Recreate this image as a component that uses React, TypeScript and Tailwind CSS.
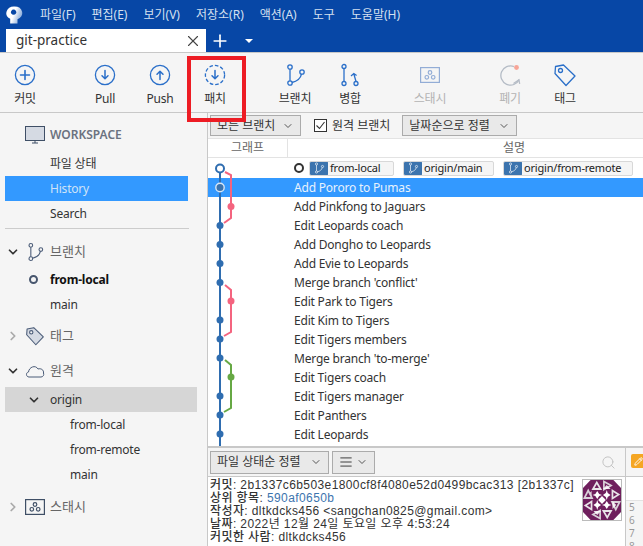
import { type ReactNode } from 'react';
import { ChevronDown, ChevronRight, Search, X, Plus, AlignJustify, Pencil } from 'lucide-react';

const BLUE = '#2a6fc9';

function Ring({ children, dashed }: { children: ReactNode; dashed?: boolean }) {
  return (
    <svg width="24" height="24" viewBox="0 0 24 24" fill="none" stroke={BLUE} strokeWidth="1.3" strokeLinecap="round" strokeLinejoin="round">
      <circle cx="12" cy="12" r="9.6" strokeDasharray={dashed ? '3.6 2' : undefined} strokeLinecap="butt" />
      {children}
    </svg>
  );
}

const DownArrow = <path d="M12 7.5v8M9 12.8l3 3 3-3" strokeWidth="1.5" />;

function BranchIcon({ color = BLUE, size = 24 }: { color?: string; size?: number }) {
  return (
    <svg width={size} height={size} viewBox="0 0 24 24" fill="none" stroke={color} strokeWidth="1.3">
      <circle cx="7" cy="4" r="2.2" />
      <circle cx="7" cy="20" r="2.2" />
      <circle cx="19" cy="9" r="2.2" />
      <path d="M7 6.2v11.6M9 19.5c5-1 8.5-4 9.5-8.3" />
    </svg>
  );
}

function MergeIcon() {
  return (
    <svg width="24" height="24" viewBox="0 0 24 24" fill="none" stroke={BLUE} strokeWidth="1.3">
      <circle cx="6" cy="3.5" r="2" />
      <circle cx="6" cy="20.5" r="2" />
      <circle cx="18" cy="20.5" r="2" />
      <path d="M6 5.5v13M18 18.5l-2-7M13 13l2.8-2.5 2.8 2" />
    </svg>
  );
}

function StashIcon({ color = '#93add6', w = 20, h = 16, stroke = 1.2 }: { color?: string; w?: number; h?: number; stroke?: number }) {
  return (
    <svg width={w} height={h} viewBox="0 0 20 16" fill="none" stroke={color} strokeWidth={stroke}>
      <rect x="0.6" y="0.6" width="18.8" height="14.8" />
      <circle cx="10" cy="5.5" r="1.8" />
      <circle cx="6.8" cy="10.3" r="1.8" />
      <circle cx="13.2" cy="10.3" r="1.8" />
    </svg>
  );
}

function DiscardIcon() {
  return (
    <svg width="24" height="24" viewBox="0 0 24 24" fill="none" stroke="#b5bcc6" strokeWidth="1.3">
      <path d="M16 3.6A9.6 9.6 0 1 0 21.2 16.5" />
      <path d="M15.5 20.5l5.4-3.6 0.8 4" />
      <circle cx="18.5" cy="4.5" r="2.4" fill="#f7a597" stroke="none" />
    </svg>
  );
}

function TagIcon({ color = BLUE, fill = 'none', size = 24 }: { color?: string; fill?: string; size?: number }) {
  return (
    <svg width={size} height={size} viewBox="0 0 24 24" fill={fill} stroke={color} strokeWidth="1.3" strokeLinejoin="round">
      <path d="M2.5 3.5l8-1.5L22 13l-9 9.5L2 10.5z" />
      <circle cx="7.5" cy="7.5" r="2" fill="#f5f5f5" />
    </svg>
  );
}

function Logo() {
  return (
    <svg width="17" height="18" viewBox="0 0 17 18" fill="none">
      <defs>
        <linearGradient id="logo-shade" x1="0" x2="1" y1="0" y2="0.4">
          <stop offset="0.55" stopColor="#fff" />
          <stop offset="1" stopColor="#8fb0dc" />
        </linearGradient>
      </defs>
      <path
        fillRule="evenodd"
        d="M8.5 0.5a7.7 6.6 0 0 1 3 12.7V17.5H4.2V12.8A7.7 6.6 0 0 1 8.5 0.5zM7.6 3.6a2.7 2.6 0 1 0 0.01 0z"
        fill="url(#logo-shade)"
      />
    </svg>
  );
}

const tools: { label: string; icon: ReactNode; cls: string; muted?: boolean }[] = [
  { label: '커밋', cls: '', icon: <Ring><path d="M12 7.5v9M7.5 12h9" strokeWidth="1.6" /></Ring> },
  { label: 'Pull', cls: 'ml-[30px]', icon: <Ring>{DownArrow}</Ring> },
  { label: 'Push', cls: 'ml-[5px]', icon: <Ring><path d="M12 16.5v-8M9 11.2l3-3 3 3" strokeWidth="1.5" /></Ring> },
  { label: '패치', cls: 'ml-[5px]', icon: <Ring dashed>{DownArrow}</Ring> },
  { label: '브랜치', cls: 'ml-[30px]', icon: <BranchIcon /> },
  { label: '병합', cls: 'ml-[5px]', icon: <MergeIcon /> },
  { label: '스태시', cls: 'ml-[30px]', muted: true, icon: <StashIcon /> },
  { label: '폐기', cls: 'ml-[30px]', muted: true, icon: <DiscardIcon /> },
  { label: '태그', cls: 'ml-[5px]', icon: <TagIcon /> },
];

const menus = ['파일(F)', '편집(E)', '보기(V)', '저장소(R)', '액션(A)', '도구', '도움말(H)'];

const commits = [
  'Add Pororo to Pumas',
  'Add Pinkfong to Jaguars',
  'Edit Leopards coach',
  'Add Dongho to Leopards',
  'Add Evie to Leopards',
  "Merge branch 'conflict'",
  'Edit Park to Tigers',
  'Edit Kim to Tigers',
  'Edit Tigers members',
  "Merge branch 'to-merge'",
  'Edit Tigers coach',
  'Edit Tigers manager',
  'Edit Panthers',
  'Edit Leopards',
];

function RefBadge({ name, width }: { name: string; width: string }) {
  return (
    <div className={`flex h-[15px] items-center overflow-hidden rounded-[2px] border border-[#d8d8d8] bg-[#f5f5f5] ${width}`}>
      <div className="flex h-[15px] w-[18px] shrink-0 items-center justify-center rounded-[2px] bg-[#3c74ae]">
        <BranchIcon color="#fff" size={12} />
      </div>
      <span className="ml-[2px] whitespace-nowrap text-[11px] tracking-[-0.2px] text-[#222]">{name}</span>
    </div>
  );
}

function Graph() {
  const blue = [10.5, 29.5, 67.5, 86.5, 105.5, 124.5, 162, 181, 200, 238, 257, 276];
  return (
    <svg className="absolute left-0 top-0" width="40" height="288" viewBox="0 0 40 288" fill="none">
      <path d="M12 11V288" stroke="#2f6db0" strokeWidth="2" />
      <path d="M17 14l6 3v43l-7 5" stroke="#f4647f" strokeWidth="2" />
      <path d="M17 127l6 5v42l-7 4" stroke="#f4647f" strokeWidth="2" />
      <path d="M17 202l6 5v43l-7 4" stroke="#66a844" strokeWidth="2" />
      <circle cx="23" cy="48.5" r="3.5" fill="#f4647f" />
      <circle cx="23" cy="143" r="3.5" fill="#f4647f" />
      <circle cx="23" cy="219" r="3.5" fill="#66a844" />
      {blue.map((y, i) =>
        i === 0 ? (
          <circle key={y} cx="12" cy={y} r="4" fill="#fff" stroke="#2f6db0" strokeWidth="2" />
        ) : i === 1 ? (
          <circle key={y} cx="12" cy={y} r="4.2" fill="#3c74ae" stroke="#d8e6f5" strokeWidth="1.4" />
        ) : (
          <circle key={y} cx="12" cy={y} r="3.5" fill="#2f6db0" />
        ),
      )}
    </svg>
  );
}

function Identicon() {
  return (
    <svg width="40" height="42" viewBox="0 0 40 40" preserveAspectRatio="none" className="shrink-0 border border-[#bbb]">
      <rect width="40" height="40" fill="#6f1f5d" />
      {[0, 90, 180, 270].map((r) => (
        <g key={r} transform={`rotate(${r} 20 20)`}>
          <path d="M0 0H8L0 8z" fill="#fff" />
          <path d="M14.5 2.5L18.5 9H10.5z" fill="#6f1f5d" stroke="#e9e4e8" strokeWidth="1.8" />
          <path d="M22 1.5L29.5 5.5L22 9.5z" fill="#6f1f5d" stroke="#d9d0d8" strokeWidth="1.8" />
          <path d="M15 11L17 14L20 15L17 16L15 19L13 16L10 15L13 14z" fill="#fff" />
          <path d="M9 11L5 15L9 19z" fill="#fff" opacity="0.85" />
        </g>
      ))}
      <path d="M20 16L24 20L20 24L16 20z" fill="#fff" />
    </svg>
  );
}

function DropButton({ label, width, children }: { label?: string; width: string; children?: ReactNode }) {
  return (
    <div className={`flex items-center justify-between border border-[#ababab] bg-[#e9e9e9] pl-[6px] pr-[6px] text-[12px] text-[#333] ${width}`}>
      {label ? <span className="whitespace-nowrap">{label}</span> : children}
      <ChevronDown size={12} strokeWidth={2} className="shrink-0 text-[#555]" />
    </div>
  );
}

function SideRow({ children, className = '' }: { children: ReactNode; className?: string }) {
  return <div className={`flex h-[25px] items-center whitespace-nowrap text-[12px] tracking-[-0.2px] ${className}`}>{children}</div>;
}

function Sidebar() {
  return (
    <aside className="w-[208px] shrink-0 border-r border-[#c8c8c8] bg-[#f5f5f5] pt-[9px] text-[#333]">
      <div className="flex h-[25px] items-center pl-[25px]">
        <svg width="20" height="18" viewBox="0 0 20 18" fill="#d5dae3" stroke="#3f4f66" strokeWidth="1">
          <rect x="0.5" y="0.5" width="19" height="14" />
          <path d="M7 17h6M10 15v2" />
        </svg>
        <span className="ml-[5px] text-[12px] font-semibold text-[#6b7280]">WORKSPACE</span>
      </div>
      <SideRow className="mt-[4px] pl-[50px]">파일 상태</SideRow>
      <SideRow className="ml-[5px] w-[183px] bg-[#3399ff] pl-[45px] text-[#cfe3f8]">History</SideRow>
      <SideRow className="pl-[50px]">Search</SideRow>
      <div className="ml-[5px] mt-[2px] h-[1px] w-[184px] bg-[#cccccc]" />
      <div className="mt-[10px] flex h-[25px] items-center pl-[6px] text-[13px] text-[#666]">
        <ChevronDown size={14} strokeWidth={3} className="text-[#333]" />
        <span className="ml-[5px]"><BranchIcon color="#4b5c78" size={20} /></span>
        <span className="ml-[5px]">브랜치</span>
      </div>
      <SideRow className="mt-[3px] pl-[29px] font-bold text-[#111]">
        <span className="h-[9px] w-[9px] rounded-full border-2 border-[#47566e]" />
        <span className="ml-[12px]">from-local</span>
      </SideRow>
      <SideRow className="pl-[50px]">main</SideRow>
      <div className="mt-[6px] flex h-[25px] items-center pl-[6px] text-[13px] text-[#666]">
        <ChevronRight size={14} strokeWidth={3} className="text-[#aaa]" />
        <span className="ml-[5px]"><TagIcon color="#4b5c78" fill="#d5dae3" size={20} /></span>
        <span className="ml-[5px]">태그</span>
      </div>
      <div className="mt-[10px] flex h-[25px] items-center pl-[6px] text-[13px] text-[#666]">
        <ChevronDown size={14} strokeWidth={3} className="text-[#333]" />
        <svg className="ml-[5px]" width="20" height="14" viewBox="0 0 20 14" fill="none" stroke="#4b5c78" strokeWidth="1">
          <path d="M4 13C1 13 .5 8.5 3.5 8 4 3 10.5 .5 13 5c3-1 6 1 5.5 4 .8 2-.5 4-2.5 4z" />
        </svg>
        <span className="ml-[5px]">원격</span>
      </div>
      <SideRow className="ml-[5px] mt-[4px] w-[192px] bg-[#d6d6d6] pl-[22px]">
        <ChevronDown size={14} strokeWidth={3} className="text-[#333]" />
        <span className="ml-[9px]">origin</span>
      </SideRow>
      <SideRow className="pl-[70px]">from-local</SideRow>
      <SideRow className="pl-[70px]">from-remote</SideRow>
      <SideRow className="pl-[70px]">main</SideRow>
      <div className="mt-[7px] flex h-[25px] items-center pl-[6px] text-[13px] text-[#666]">
        <ChevronRight size={14} strokeWidth={3} className="text-[#aaa]" />
        <span className="ml-[5px]"><StashIcon color="#3f4f66" /></span>
        <span className="ml-[5px]">스태시</span>
      </div>
    </aside>
  );
}

export default function App() {
  return (
    <div className="relative flex h-[546px] w-[643px] flex-col overflow-hidden bg-white font-['Noto_Sans','Noto_Sans_CJK_KR',sans-serif]">
      {/* Title bar */}
      <header className="h-[52px] shrink-0 bg-[#0747a6]">
        <div className="flex h-[29px] items-center pl-[6px]">
          <Logo />
          <nav className="ml-[17px] flex gap-[16px] text-[12px] text-[#d5e0f0]">
            {menus.map((m) => (
              <span key={m}>{m}</span>
            ))}
          </nav>
        </div>
        <div className="flex h-[23px] items-center pl-[6px]">
          <div className="flex h-[23px] w-[200px] items-center justify-between bg-white pl-[10px] pr-[4px] text-[13.5px] text-[#333]">
            git-practice
            <X size={18} strokeWidth={1.5} className="text-[#444]" />
          </div>
          <Plus size={20} strokeWidth={2} className="ml-[4px] text-white" />
          <span className="ml-[15px] h-0 w-0 border-x-[4px] border-t-[4px] border-x-transparent border-t-white" />
        </div>
      </header>

      {/* Toolbar */}
      <div className="flex h-[61px] shrink-0 border-y border-[#c8c8c8] bg-[#f5f5f5] pt-[10px]">
        {tools.map((t) => (
          <div key={t.label} className={`flex w-[50px] flex-col items-center ${t.cls}`}>
            <div className="flex h-[24px] items-center">{t.icon}</div>
            <span className={`mt-[3px] text-[12px] tracking-[-0.2px] ${t.muted ? 'text-[#b3b3b3]' : 'text-[#333]'}`}>{t.label}</span>
          </div>
        ))}
      </div>

      <div className="flex min-h-0 flex-1">
        <Sidebar />
        <main className="flex min-w-0 flex-1 flex-col">
          {/* Filter bar */}
          <div className="flex h-[25px] shrink-0 items-center bg-[#f5f5f5] pl-[2px]">
            <DropButton label="모든 브랜치" width="h-[21px] w-[91px]" />
            <span className="ml-[13px] flex h-[13px] w-[13px] items-center justify-center border border-[#333] bg-white">
              <svg width="11" height="11" viewBox="0 0 11 11" fill="none" stroke="#333" strokeWidth="1.1"><path d="M1.5 5.5l3 3 5-6.5" /></svg>
            </span>
            <span className="ml-[5px] whitespace-nowrap text-[12px] text-[#333]">원격 브랜치</span>
            <DropButton label="날짜순으로 정렬" width="ml-[12px] h-[21px] w-[115px]" />
          </div>
          {/* Column headers */}
          <div className="flex h-[20px] shrink-0 items-center border-y border-[#e3e3e3] text-[12px] text-[#666]">
            <div className="flex h-full w-[80px] items-center justify-center border-r border-[#e3e3e3]">그래프</div>
            <div className="flex-1 pl-[215px]">설명</div>
          </div>
          {/* Commit list */}
          <div className="relative h-[288px] shrink-0 overflow-hidden">
            <div className="flex h-[20px] items-center pl-[86px]">
              <span className="h-[10px] w-[10px] rounded-full border-[2.5px] border-[#333]" />
              <div className="ml-[5px] flex gap-[9px]">
                <RefBadge name="from-local" width="w-[85px]" />
                <RefBadge name="origin/main" width="w-[91px]" />
                <RefBadge name="origin/from-remote" width="w-[130px]" />
              </div>
            </div>
            {commits.map((c, i) => (
              <div key={c} className={`flex h-[19px] items-center pl-[86px] text-[12px] tracking-[-0.2px] ${i === 0 ? 'bg-[#3399ff] text-[#e8f2fd]' : 'text-[#333]'}`}>
                {c}
              </div>
            ))}
            <Graph />
          </div>
          {/* Bottom toolbar */}
          <div className="flex min-h-0 flex-1 border-t-2 border-[#c8c8c8]">
            <div className="min-w-0 flex-1">
              <div className="flex h-[29px] items-center gap-[3px] border-b border-[#c8c8c8] bg-[#f5f5f5] pl-[2px]">
                <DropButton label="파일 상태순 정렬" width="h-[23px] w-[119px]" />
                <DropButton width="h-[23px] w-[43px]">
                  <AlignJustify size={14} strokeWidth={1.6} className="text-[#333]" />
                </DropButton>
                <Search size={15} strokeWidth={1.6} className="ml-auto mr-[9px] text-[#c4c4c4]" />
              </div>
              <div className="flex justify-between pl-[2px] pr-[3px] pt-[2px]">
                <div className="whitespace-nowrap font-['Liberation_Sans','Noto_Sans_CJK_KR',sans-serif] text-[12px] leading-[13px] tracking-[0.4px] text-[#333]">
                  <p><b className="font-medium">커밋:</b> 2b1337c6b503e1800cf8f4080e52d0499bcac313 [2b1337c]</p>
                  <p><b className="font-medium">상위 항목:</b> <span className="text-[#3c74ae]">590af0650b</span></p>
                  <p><b className="font-medium">작성자:</b> dltkdcks456 &lt;sangchan0825@gmail.com&gt;</p>
                  <p><b className="font-medium">날짜:</b> 2022년 12월 24일 토요일 오후 4:53:24</p>
                  <p><b className="font-medium">커밋한 사람:</b> dltkdcks456</p>
                </div>
                <Identicon />
              </div>
            </div>
            {/* Diff panel edge */}
            <div className="w-[18px] shrink-0 border-l border-[#c8c8c8] bg-white">
              <div className="h-[29px] border-b border-[#c8c8c8] bg-[#f5f5f5] pl-[5px] pt-[6px]">
                <span className="flex h-[14px] w-[14px] items-center justify-center rounded-[2px] bg-[#f5a623]">
                  <Pencil size={9} strokeWidth={2.4} className="text-white" />
                </span>
              </div>
              <div className="mt-[23px] border-t border-[#e3e3e3] bg-[#f5f5f5] pl-[3px] text-[10px] leading-[13px] text-[#999]">
                <p>5</p>
                <p>6</p>
                <p>7</p>
                <p>8</p>
              </div>
            </div>
          </div>
        </main>
      </div>

      {/* Red highlight round the fetch button */}
      <div className="absolute left-[187px] top-[56px] h-[66px] w-[59px] border-[4px] border-[#ed1c24]" />
    </div>
  );
}
